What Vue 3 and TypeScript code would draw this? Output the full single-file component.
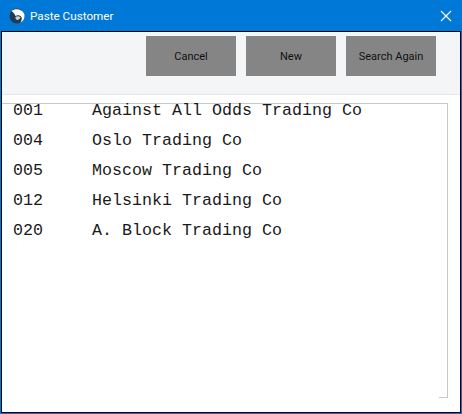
<script setup lang="ts">
const rows = [
  { code: '001', name: 'Against All Odds Trading Co' },
  { code: '004', name: 'Oslo Trading Co' },
  { code: '005', name: 'Moscow Trading Co' },
  { code: '012', name: 'Helsinki Trading Co' },
  { code: '020', name: 'A. Block Trading Co' },
]
const buttons = ['Cancel', 'New', 'Search Again']
</script>

<template>
  <div class="window">
    <header class="titlebar">
      <svg class="logo" width="16" height="16" viewBox="0 0 16 16">
        <circle cx="8" cy="8" r="7.5" fill="#1f3a52" />
        <path d="M2.500 3C6 .2 13 .5 15.300 6c.9 3.500-.8 7-3.800 8.500 1.200-2 1.500-3.800 1-5.500C11 7 8.500 6.500 6.500 8 5.500 6 4.500 4 2.500 3Z" fill="#fff" />
        <path d="M6.500 9c1.500-1 3.800-1 5 .3-.6 1.800-2.400 3-4 2.500-.8-.7-1.200-1.800-1-2.800Z" fill="#c9d3dc" />
      </svg>
      <span class="title">Paste Customer</span>
      <svg class="close" width="12" height="12" viewBox="0 0 12 12">
        <path d="M1 1l10 10M11 1L1 11" stroke="#fff" stroke-width="1.200" fill="none" />
      </svg>
    </header>
    <div class="body">
      <div class="toolbar">
        <button v-for="b in buttons" :key="b" class="btn" type="button">{{ b }}</button>
      </div>
      <div class="content">
        <div class="list">
          <div class="rows">
            <div v-for="r in rows" :key="r.code" class="row">
              <span class="code">{{ r.code }}</span>
              <span class="name">{{ r.name }}</span>
            </div>
          </div>
        </div>
      </div>
    </div>
  </div>
</template>

<style>
html, body { margin: 0; background: #fff; }
</style>

<style scoped>
.window {
  width: 462px;
  height: 414px;
  box-sizing: border-box;
  border: 1px solid #0078d7;
  border-top: 0;
  display: flex;
  flex-direction: column;
  background: #0078d7;
  overflow: hidden;
}
.titlebar {
  height: 31px;
  flex: none;
  display: flex;
  align-items: center;
  padding-left: 8px;
  color: #fff;
}
.logo { flex: none; }
.title {
  margin-left: 5px;
  font: 11.700px Roboto, sans-serif;
}
.close { margin-left: auto; margin-right: 9px; }
.body {
  flex: 1;
  min-height: 0;
  border: 1px solid #000;
  background: #fff;
  display: flex;
  flex-direction: column;
}
.toolbar {
  height: 63px;
  flex: none;
  box-sizing: border-box;
  background: #f4f5f7;
  border-bottom: 1px solid #e6e6e6;
  display: flex;
  justify-content: flex-end;
  gap: 10px;
  padding: 4px 24px 0 0;
}
.btn {
  width: 90px;
  height: 40px;
  padding: 0;
  border: 0;
  background: #858585;
  color: #111;
  font: 11px Roboto, sans-serif;
}
.content {
  flex: 1;
  min-height: 0;
  padding: 8px 12px 14px 0;
}
.list {
  height: 100%;
  box-sizing: border-box;
  border-top: 1px solid #c8c8c8;
  border-right: 1px solid #c8c8c8;
  background: linear-gradient(#c8c8c8, #c8c8c8) right bottom / 8px 1px no-repeat;
}
.rows { margin-top: -9px; }
.row {
  height: 30px;
  padding-left: 11px;
  display: flex;
  align-items: center;
  font: 16.670px "Liberation Mono", monospace;
  color: #1a1a1a;
  white-space: pre;
}
.code { width: 79px; }
</style>
